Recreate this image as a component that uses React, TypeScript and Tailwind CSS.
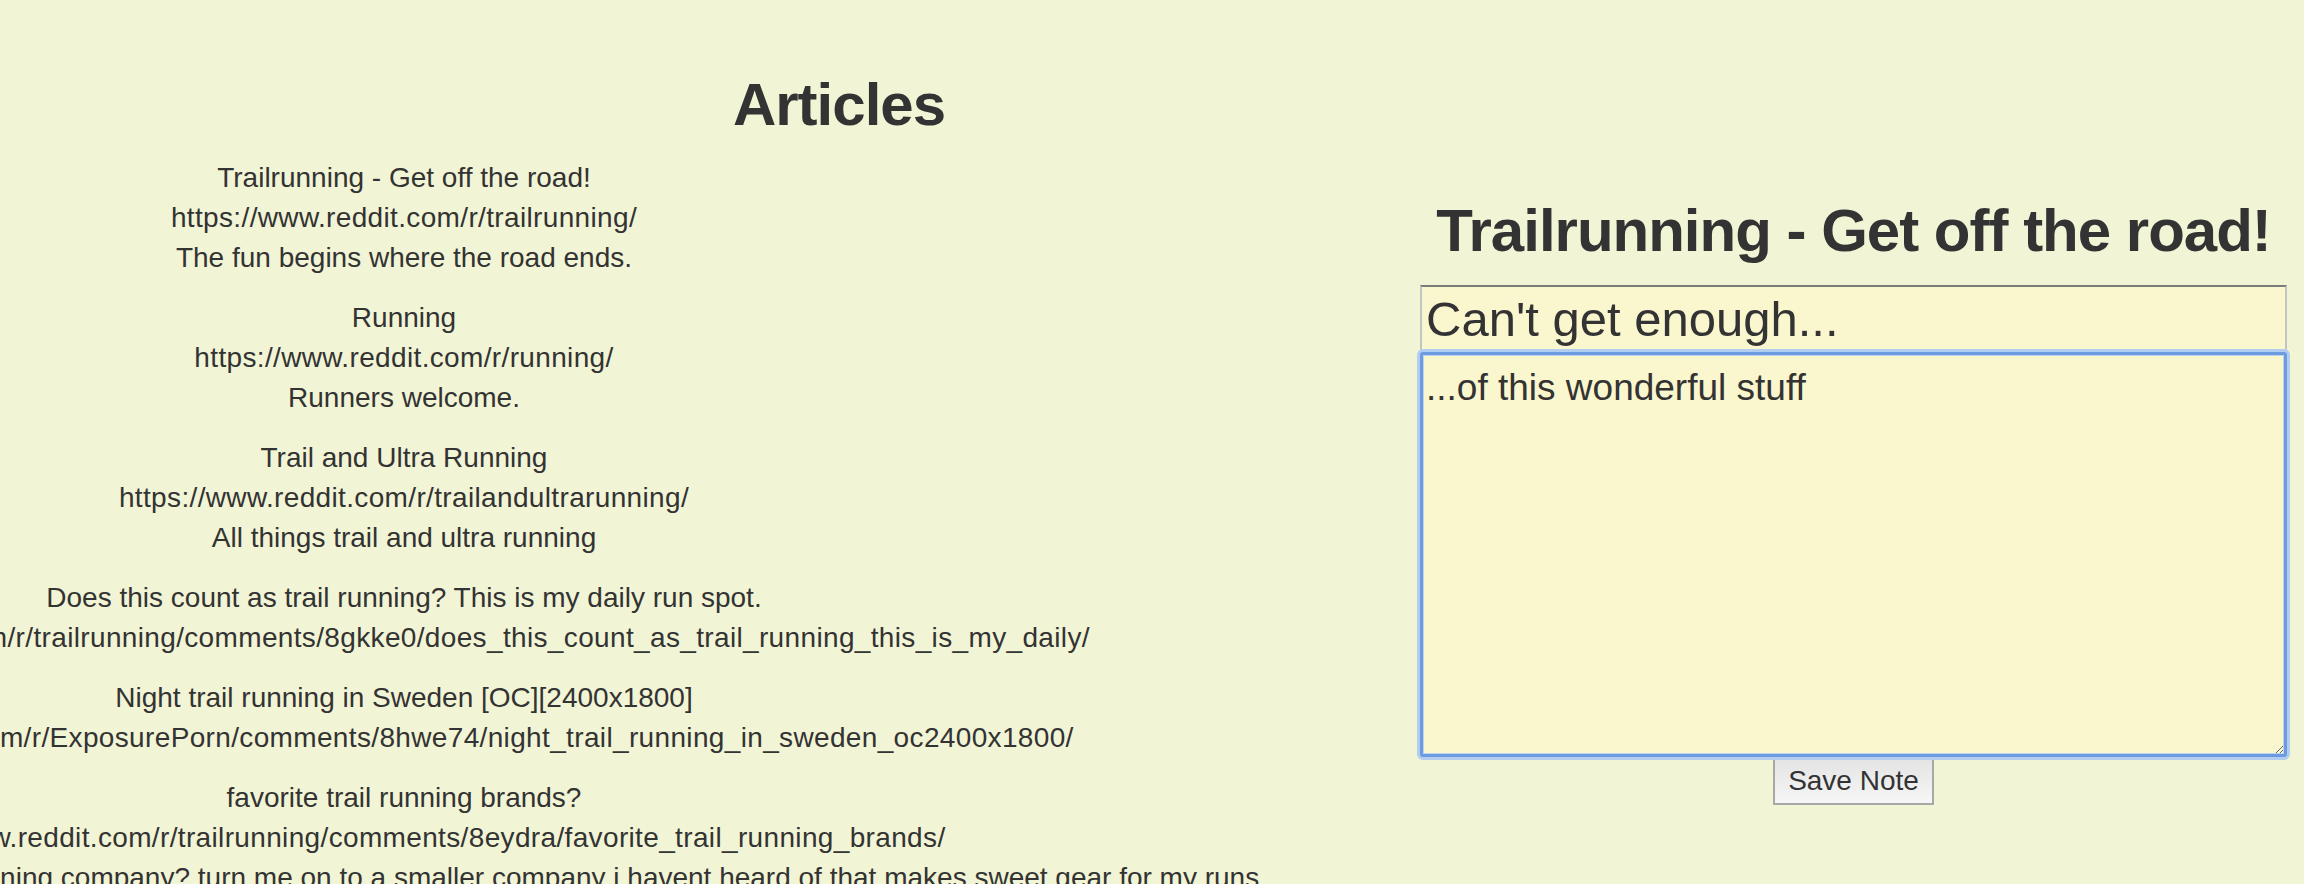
import React from "react";

type Article = { title: string; url: string; description?: string };

const articles: Article[] = [
  {
    title: "Trailrunning - Get off the road!",
    url: "https://www.reddit.com/r/trailrunning/",
    description: "The fun begins where the road ends.",
  },
  {
    title: "Running",
    url: "https://www.reddit.com/r/running/",
    description: "Runners welcome.",
  },
  {
    title: "Trail and Ultra Running",
    url: "https://www.reddit.com/r/trailandultrarunning/",
    description: "All things trail and ultra running",
  },
  {
    title: "Does this count as trail running? This is my daily run spot.",
    url: "https://www.reddit.com/r/trailrunning/comments/8gkke0/does_this_count_as_trail_running_this_is_my_daily/",
  },
  {
    title: "Night trail running in Sweden [OC][2400x1800]",
    url: "https://www.reddit.com/r/ExposurePorn/comments/8hwe74/night_trail_running_in_sweden_oc2400x1800/",
  },
  {
    title: "favorite trail running brands?",
    url: "https://www.reddit.com/r/trailrunning/comments/8eydra/favorite_trail_running_brands/",
    description:
      "Hey all, what is your favorite trail running company? turn me on to a smaller company i havent heard of that makes sweet gear for my runs",
  },
];

export default function App() {
  return (
    <div className="flex h-[884px] w-[2304px] overflow-hidden bg-[#f2f5d5] font-['Liberation_Sans',Arial,sans-serif] text-[#333]">
      {/* Articles list */}
      <section className="w-[1400px] shrink-0 pt-[72px]">
        <h2 className="ml-[278px] text-center text-[60px] font-bold leading-[66px] tracking-[-1px]">
          Articles
        </h2>
        <div className="mt-[20px] flex w-[808px] flex-col items-center gap-[20px] text-[28px] leading-[40px]">
          {articles.map((a) => (
            <div key={a.url} className="whitespace-nowrap text-center">
              <p>{a.title}</p>
              <p className="tracking-[0.35px]">{a.url}</p>
              {a.description && <p>{a.description}</p>}
            </div>
          ))}
        </div>
      </section>

      {/* Note editor */}
      <section className="flex-1 pl-[20px] pr-[17px] pt-[198px]">
        <h2 className="whitespace-nowrap text-center text-[60px] font-bold leading-[66px] tracking-[-1px]">
          Trailrunning - Get off the road!
        </h2>
        <input
          type="text"
          defaultValue="Can't get enough..."
          className="mt-[21px] block h-[67px] w-full border-2 border-x-[#c4c4c4] border-t-[#7b7b7b] border-b-[#d9d9d9] bg-[#faf6cd] pl-[4px] pt-[3px] text-[49px] text-[#333] outline-none"
        />
        <textarea
          defaultValue="...of this wonderful stuff"
          className="relative z-10 block h-[405px] w-full rounded-[3px] border-[3px] border-[#6c9be0] bg-[#faf6cd] pl-[3px] pt-[12px] text-[37px] leading-[42px] text-[#333] shadow-[0_0_0_3px_#b3cdf0,inset_0_0_0_1px_#bdd4f1] outline-none"
        />
        <button
          type="button"
          className="mx-auto block h-[48px] border-2 border-[#a8a8a8] bg-linear-to-b from-[#e4e4e4] to-[#f6f6f6] px-[13px] text-[28px] leading-[40px] text-[#333]"
        >
          Save Note
        </button>
      </section>
    </div>
  );
}
